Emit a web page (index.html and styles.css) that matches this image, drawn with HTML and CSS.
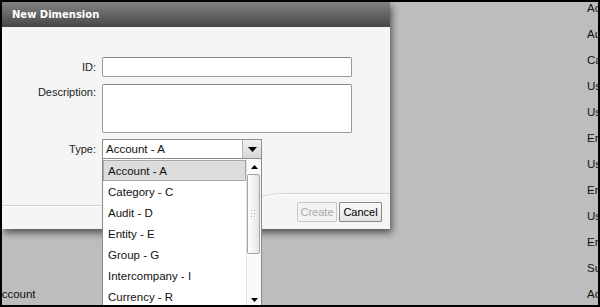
FILE: index.html
```html
<!DOCTYPE html>
<html>
<head>
<meta charset="utf-8">
<link rel="stylesheet" href="styles.css">
</head>
<body>
<div class="screen">
  <div class="bg">
    <div class="bg-row"><span class="bg-left"></span><span class="bg-right">Account</span></div>
    <div class="bg-row"><span class="bg-left"></span><span class="bg-right">Audit</span></div>
    <div class="bg-row"><span class="bg-left"></span><span class="bg-right">Category</span></div>
    <div class="bg-row"><span class="bg-left"></span><span class="bg-right">User</span></div>
    <div class="bg-row"><span class="bg-left"></span><span class="bg-right">User</span></div>
    <div class="bg-row"><span class="bg-left"></span><span class="bg-right">Entity</span></div>
    <div class="bg-row"><span class="bg-left"></span><span class="bg-right">User</span></div>
    <div class="bg-row"><span class="bg-left"></span><span class="bg-right">Entity</span></div>
    <div class="bg-row"><span class="bg-left"></span><span class="bg-right">User</span></div>
    <div class="bg-row"><span class="bg-left"></span><span class="bg-right">Entity</span></div>
    <div class="bg-row"><span class="bg-left"></span><span class="bg-right">Summary</span></div>
    <div class="bg-row"><span class="bg-left">Account</span><span class="bg-right">Account</span></div>
  </div>

  <div class="dialog">
    <div class="titlebar">New Dimension</div>
    <div class="dlg-body">
      <div class="row row-id">
        <label>ID:</label>
        <div class="textbox"></div>
      </div>
      <div class="row row-desc">
        <label>Description:</label>
        <div class="textarea"></div>
      </div>
      <div class="row row-type">
        <label>Type:</label>
        <div class="select">
          <span class="select-text">Account - A</span>
          <span class="select-btn"><svg width="9" height="5" viewBox="0 0 9 5"><path d="M0 0H9L4.5 5Z" fill="#000"/></svg></span>
          <div class="dropdown">
            <div class="items">
              <div class="item selected">Account - A</div>
              <div class="item">Category - C</div>
              <div class="item">Audit - D</div>
              <div class="item">Entity - E</div>
              <div class="item">Group - G</div>
              <div class="item">Intercompany - I</div>
              <div class="item">Currency - R</div>
              <div class="item">Scenario - S</div>
            </div>
            <div class="scroll">
              <div class="sc-arrow"><svg width="7" height="4" viewBox="0 0 7 4"><path d="M0 4H7L3.5 0Z" fill="#000"/></svg></div>
              <div class="thumb"><svg width="5" height="9" viewBox="0 0 5 9"><g fill="#b0b0b0"><rect x="0" y="0" width="1" height="1"/><rect x="3" y="0" width="1" height="1"/><rect x="0" y="3" width="1" height="1"/><rect x="3" y="3" width="1" height="1"/><rect x="0" y="6" width="1" height="1"/><rect x="3" y="6" width="1" height="1"/></g><g fill="#fff"><rect x="1" y="1" width="1" height="1"/><rect x="4" y="1" width="1" height="1"/><rect x="1" y="4" width="1" height="1"/><rect x="4" y="4" width="1" height="1"/><rect x="1" y="7" width="1" height="1"/><rect x="4" y="7" width="1" height="1"/></g></svg></div>
              <div class="sc-arrow down"><svg width="7" height="4" viewBox="0 0 7 4"><path d="M0 0H7L3.5 4Z" fill="#000"/></svg></div>
            </div>
          </div>
        </div>
      </div>
      <svg class="sep" width="388" height="16" viewBox="0 0 388 16"><path d="M0 14.5H218C246 14.5 256 2.5 282 2.5H388" fill="none" stroke="#d0d0d0" stroke-width="1"/><path d="M0 15.5H218C246 15.5 256 3.5 282 3.5H388" fill="none" stroke="#ffffff" stroke-width="1"/></svg>
      <div class="buttons">
        <button class="btn disabled">Create</button>
        <button class="btn">Cancel</button>
      </div>
    </div>
  </div>
</div>
</body>
</html>
```
FILE: styles.css
```css
* { box-sizing: border-box; }
html, body { margin: 0; padding: 0; }
body {
  width: 600px;
  height: 307px;
  overflow: hidden;
  font-family: "Liberation Sans", Arial, sans-serif;
}
.screen {
  position: relative;
  width: 600px;
  height: 307px;
  border: 2px solid #000;
  background: #bdbdbd;
  overflow: hidden;
}
.bg { margin-top: -7px; }
.bg-row {
  display: grid;
  grid-template-columns: 585px 40px;
  height: 26px;
  line-height: 26px;
  font-size: 11.5px;
  color: #111;
  white-space: nowrap;
}
.bg-left { margin-left: -8px; }
.bg-right { overflow: hidden; }

.dialog {
  position: absolute;
  left: 0;
  top: 0;
  width: 388px;
  height: 227px;
  background: #f5f5f5;
  box-shadow: 2px 4px 7px rgba(0, 0, 0, 0.55);
  display: flex;
  flex-direction: column;
  z-index: 2;
}
.titlebar {
  height: 25px;
  line-height: 25px;
  padding-left: 10px;
  background: linear-gradient(#828282, #474747);
  color: #fff;
  font-family: "DejaVu Sans", sans-serif;
  font-weight: bold;
  font-size: 10px;
}
.dlg-body {
  flex: 1;
  padding-top: 30px;
  display: flex;
  flex-direction: column;
}
.row {
  display: grid;
  grid-template-columns: 94px 250px;
  column-gap: 6px;
  align-items: center;
}
.row label {
  text-align: right;
  font-size: 11px;
  color: #222;
}
.textbox {
  height: 20px;
  background: #fff;
  border: 1px solid #9a9a9a;
  border-top-color: #8a8a8a;
  border-radius: 2px;
}
.row-desc { margin-top: 7px; align-items: start; }
.row-desc label { padding-top: 2px; }
.textarea {
  height: 49px;
  background: #fff;
  border: 1px solid #9a9a9a;
  border-top-color: #8a8a8a;
  border-radius: 2px;
}
.row-type { margin-top: 6px; }
.select {
  position: relative;
  width: 160px;
  height: 20px;
  background: #fff;
  border: 1px solid #8e8e8e;
  display: flex;
  align-items: center;
}
.select-text {
  flex: 1;
  padding-left: 3px;
  font-size: 11.5px;
  color: #111;
}
.select-btn {
  width: 19px;
  height: 100%;
  border-left: 1px solid #b4b4b4;
  background: linear-gradient(#f0f0f0, #d6d6d6);
  display: flex;
  align-items: center;
  justify-content: center;
}
.dropdown {
  position: absolute;
  left: -1px;
  top: 100%;
  width: 160px;
  height: 150px;
  background: #fff;
  border: 1px solid #8a8a8a;
  display: flex;
  overflow: hidden;
  z-index: 5;
}
.items {
  width: 143px;
  padding-top: 1px;
}
.item {
  height: 21px;
  padding-left: 4px;
  padding-top: 2px;
  line-height: 17px;
  border: 1px solid transparent;
  font-size: 11.5px;
  color: #111;
  white-space: nowrap;
}
.item.selected {
  background: #dcdcdc;
  border-color: #a6a6a6;
}
.scroll {
  width: 15px;
  border-left: 1px solid #e2e2e2;
  display: flex;
  flex-direction: column;
  background: #fafafa;
}
.sc-arrow {
  height: 15px;
  display: flex;
  align-items: center;
  justify-content: center;
}
.sc-arrow.down { margin-top: auto; }
.thumb {
  height: 80px;
  margin: 0 1px 0 0;
  border: 1px solid #a4a4a4;
  border-radius: 2px;
  background: linear-gradient(to right, #ffffff, #e4e4e4);
  display: flex;
  align-items: center;
  justify-content: center;
}
.sep {
  display: block;
  margin-top: 32px;
}
.buttons {
  margin-top: -5px;
  display: flex;
  justify-content: flex-end;
  gap: 2px;
  padding-right: 8px;
}
.btn {
  height: 20px;
  padding: 0 2px;
  font-family: "Liberation Sans", Arial, sans-serif;
  font-size: 11px;
  color: #000;
  background: linear-gradient(#fbfbfb, #e2e2e2);
  border: 1px solid #8a8a8a;
  border-radius: 1px;
}
.btn.disabled {
  width: 40px;
  color: #a8a8a8;
  background: #f3f3f3;
  border-color: #c8c8c8;
}
.btn:not(.disabled) { width: 43px; }
```
